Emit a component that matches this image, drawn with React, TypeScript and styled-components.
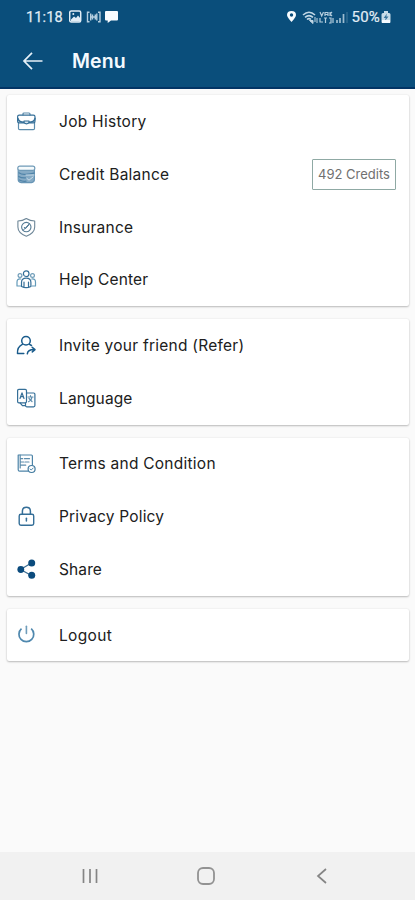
import React from "react";
import styled, { createGlobalStyle } from "styled-components";

const GlobalStyle = createGlobalStyle`
  * { box-sizing: border-box; }
  html, body { margin: 0; background: #fafafa; }
`;

const Screen = styled.div`
  display: flex;
  flex-direction: column;
  width: 415px;
  height: 900px;
  overflow: hidden;
  background: #fafafa;
  font-family: Inter, Roboto, sans-serif;
`;

const Header = styled.header`
  flex: none;
  height: 89px;
  background: #0a4e7b;
  border-bottom: 2px solid #023465;
  color: #f5faff;
`;

const StatusBar = styled.div`
  display: flex;
  align-items: center;
  justify-content: space-between;
  height: 34px;
  padding: 0 24px 0 26px;
  font: 400 14.5px/34px Roboto, sans-serif;
  color: #e2edf5;
`;

const StatusGroup = styled.div`
  display: flex;
  align-items: center;
  svg { display: block; flex: none; }
`;

const Clock = styled.span`
  width: 37px;
  padding-top: 1px;
  line-height: 33px;
  margin-right: 6px;
  letter-spacing: 0.15px;
  -webkit-text-stroke: 0.25px currentColor;
`;

const Battery = styled.span`
  margin-left: 3px;
  margin-right: 1px;
  padding-top: 1px;
  font-size: 15px;
  line-height: 33px;
  letter-spacing: 0.2px;
  -webkit-text-stroke: 0.2px currentColor;
`;

const TitleBar = styled.div`
  display: flex;
  align-items: center;
  height: 54px;
  padding-left: 22px;
  svg { display: block; }
`;

const Title = styled.h1`
  margin: 0 0 0 29px;
  font: 600 19.5px/24px Inter, sans-serif;
  letter-spacing: 0.1px;
`;

const Content = styled.main`
  display: flex;
  flex: 1;
  flex-direction: column;
  gap: 13px;
  padding: 6.4px 6px 0 7px;
`;

const Card = styled.section`
  background: #fff;
  border-radius: 2px;
  box-shadow: 0 1px 2px rgba(0, 0, 0, 0.24), 0 0 2px rgba(0, 0, 0, 0.08);
`;

const Row = styled.div`
  display: flex;
  align-items: center;
  height: 52.7px;
  padding: 0 13px 0 9px;
`;

const IconSlot = styled.span`
  display: flex;
  width: 43px;
  svg { display: block; }
`;

const Label = styled.span<{ $track: number }>`
  padding-top: 1.2px;
  font-size: 15.5px;
  line-height: 22px;
  letter-spacing: ${(p) => p.$track}px;
  color: #202020;
  white-space: nowrap;
`;

const Credits = styled.span`
  display: flex;
  align-items: center;
  justify-content: center;
  width: 84px;
  height: 31px;
  margin-left: auto;
  border: 1px solid #8fa9a4;
  border-radius: 1px;
  font: 400 13px/20px Inter, sans-serif;
  white-space: nowrap;
  color: #707070;
`;

const NavBar = styled.nav`
  display: flex;
  flex: none;
  align-items: center;
  justify-content: space-between;
  height: 48px;
  padding: 0 83px 0 80px;
  background: #f1f1f1;
  svg { display: block; }
`;

const Glyph = ({ children }: { children: React.ReactNode }) => (
  <svg width="21" height="21" viewBox="0 0 21 21" fill="none" stroke="#356f98" strokeWidth="1.2" strokeLinecap="round" strokeLinejoin="round">
    {children}
  </svg>
);

const icons = {
  job: (
    <Glyph>
      <path d="M7 4V3q0-1 1-1h5q1 0 1 1v1M2.500 11v6.500q0 1.200 1.200 1.200h13.600q1.200 0 1.200-1.200V11" stroke="#5c8cac" />
      <rect x="1.600" y="4.200" width="17.400" height="7.600" rx="1.600" />
      <path d="M2 7.500q1 3.800 6 3.800M19 7.500q-1 3.800-6 3.800" strokeWidth="1.400" />
      <path d="M8 10h5v1.600q-2.500 2.600-5 0z" fill="#d8e7f1" />
    </Glyph>
  ),
  credit: (
    <Glyph>
      <path d="M2.200 5.500h16.200v10q0 2.600-3 3.200H5.200q-3-.6-3-3.200z" fill="#86abc5" stroke="#6795b5" />
      <rect x="1.800" y="2.200" width="17" height="4.200" rx="2" fill="#f5fafc" stroke="#6f9ab7" />
      <path d="M2.800 8.800q3 2 7.200 1.500t8-1.200M2.700 12.500q3 1.800 6.800 1.400M3.500 16q3 1.600 6.500 1.200" stroke="#4f83a8" />
      <path d="M10 11h8M11 14.500l2 1.700 4-3.200" stroke="#d2e2ed" strokeWidth=".9" />
    </Glyph>
  ),
  insurance: (
    <Glyph>
      <path d="M10.300 1.500Q14 3.900 18.700 4v6q0 6-8.400 9.300Q1.900 16 1.900 10V4q4.700-.1 8.400-2.500z" stroke="#6e8798" strokeWidth="1.100" />
      <circle cx="10.300" cy="10.100" r="4.700" stroke="#577c95" strokeWidth="1.100" />
      <path d="m8.200 10.300 1.300 1.400 3.300-3.700M7.200 13.300l6.200-6.600" stroke="#4c7693" strokeWidth="1" />
    </Glyph>
  ),
  help: (
    <Glyph>
      <circle cx="10.200" cy="4.700" r="2.800" />
      <circle cx="4" cy="6.500" r="1.900" stroke="#6f9cb8" />
      <circle cx="16.500" cy="6.500" r="1.900" stroke="#6f9cb8" />
      <path d="M5.500 17.500v-4q0-4.300 4.700-4.300t4.700 4.300v4q-4.700 2.400-9.400 0zM8 13v4.500M12.500 13v4.500" />
      <path d="M4.700 10Q1 9.500 1 13v4h3.500M15.800 10q3.700-.5 3.700 3v4H16" stroke="#639ab9" />
    </Glyph>
  ),
  invite: (
    <Glyph>
      <g stroke="#1a5c8c" strokeWidth="1.500">
        <circle cx="10" cy="5.800" r="4.300" />
        <path d="M6.300 9.300C2.800 11 1.200 14 1.500 18.500h6.300M13.500 9.400l2 1.100M11.300 18.800q.5-4.300 7-4.200M16.200 12.300l2.800 2.300-2.700 2.300" />
      </g>
    </Glyph>
  ),
  language: (
    <Glyph>
      <rect x="1.600" y="1.400" width="8.900" height="13.500" rx="1.300" />
      <path d="M10.500 5h7.200q1.200 0 1.200 1.200v11.400q0 1.200-1.200 1.200h-7q-1.200 0-1.200-1.200V15M4 10.500l2-5.600 2 5.600M4.800 8.700h2.500M4.200 15l2.200 2.600H9" />
      <path d="M12 9h5M14.500 7.700V9M16 9q-.6 3.500-3.500 4.700M13 10.500l3 3" stroke="#5c8cac" />
    </Glyph>
  ),
  terms: (
    <Glyph>
      <path d="M12 18.200H3.700q-1.500 0-1.500-1.500V2h13.200q1 0 1 1v9" stroke="#4d84a8" />
      <path d="M4.200 2v13M4.700 5.700h2M8.500 5.700h5M4.700 9h3M9 9h4M4.700 12.200h5" stroke="#5c8cac" />
      <circle cx="15.600" cy="16" r="3.500" fill="#fff" stroke="#427ba0" />
      <path d="m14 16 1.200 1 2-2" stroke="#427ba0" strokeWidth=".9" />
    </Glyph>
  ),
  privacy: (
    <Glyph>
      <rect x="3.200" y="8.200" width="14.500" height="11" rx="1.700" strokeWidth="1.400" />
      <path d="M6.400 8V5.300q0-4 4-4t4 4V8" strokeWidth="1.500" />
      <path d="M10.400 12.300v2.700" strokeWidth="1.500" />
    </Glyph>
  ),
  share: (
    <Glyph>
      <path d="M15 4.300 4.500 10.500 15 16.200" stroke="#3b6d92" strokeWidth="1.300" />
      <g fill="#0b4b7d" stroke="none">
        <circle cx="15.700" cy="4" r="3.500" /><circle cx="4.800" cy="10.500" r="3.400" /><circle cx="15.700" cy="16.300" r="3.500" />
      </g>
    </Glyph>
  ),
  logout: (
    <Glyph>
      <path d="M5.500 4.700a7.400 7.400 0 1 0 9.700 0" stroke="#4f88ae" strokeWidth="1.700" strokeLinecap="butt" />
      <path d="M10.400 2.200v7.200" stroke="#6f9dba" strokeWidth="1.600" />
    </Glyph>
  ),
};

type Item = { icon: keyof typeof icons; label: string; track: number; credits?: string };

const groups: Item[][] = [
  [
    { icon: "job", label: "Job History", track: 0.28 },
    { icon: "credit", label: "Credit Balance", track: 0.24, credits: "492 Credits" },
    { icon: "insurance", label: "Insurance", track: 0.22 },
    { icon: "help", label: "Help Center", track: 0.16 },
  ],
  [
    { icon: "invite", label: "Invite your friend (Refer)", track: 0.25 },
    { icon: "language", label: "Language", track: 0.12 },
  ],
  [
    { icon: "terms", label: "Terms and Condition", track: 0.25 },
    { icon: "privacy", label: "Privacy Policy", track: 0.19 },
    { icon: "share", label: "Share", track: 0.12 },
  ],
  [{ icon: "logout", label: "Logout", track: 0.35 }],
];

const NotificationIcons = () => (
  <svg width="51" height="16" viewBox="0 0 51 16">
    <rect x=".7" y="2" width="11" height="11" rx="1.500" fill="none" stroke="#e2edf5" strokeWidth="1.500" />
    <path d="m2 10.500 3-3L7 9l2-2.500 2.500 3v3H2z" fill="#e2edf5" />
    <circle cx="4.300" cy="5" r="1" fill="#e2edf5" />
    <path d="M20.500 3.200h-2v9.500h2M29 3.200h2v9.500h-2M21.700 4.500v7M27.800 4.500v7M22 8h6M23.500 5.500v5M26.300 5.500v5" fill="none" stroke="#b6cfe0" strokeWidth="1.400" />
    <path d="M37 2h11q1 0 1 1v7.500q0 1-1 1h-6L38.700 14v-2.500H37q-1 0-1-1V3q0-1 1-1z" fill="#f8fcff" />
  </svg>
);

const SignalIcons = () => (
  <svg width="63" height="18" viewBox="0 0 63 18">
    <path d="M5.500 3Q1 3 1 7q0 2 4.500 7Q10 9 10 7q0-4-4.500-4z" fill="#f8fcff" />
    <circle cx="5.500" cy="7" r="1.700" fill="#0a4e7b" />
    <path d="M17 7q6-5.500 12 0M19 9.300q4-3.500 8 0M21 11.500q2-1.700 4 0" fill="none" stroke="#c1d7e5" strokeWidth="1.600" />
    <path d="M23.500 12.500h3.500v3zM29 9v5M31 10v5" stroke="#bfd5e4" fill="#bfd5e4" />
    <path d="M34 4l1.700 4L37.500 4M39 8V4.500h3V8M39 6.500h3M44 4v4M46 4l-2 2 2 2M34 10v4h3M38 10h3M39.500 10v5M43 10h2v5h-2M47 10v5" fill="none" stroke="#b4cddd" strokeWidth="1.200" />
    <path d="M51 12v3M54 10v5M57.500 6v9" stroke="#9dbcd0" strokeWidth="1.700" />
    <path d="M61 4v11" stroke="#42789b" />
  </svg>
);

const BatteryIcon = () => (
  <svg width="10" height="14" viewBox="0 0 10 14">
    <path d="M3 1h4v2h1q1.500 0 1.500 1.500V12q0 1-1 1h-7q-1 0-1-1V4.500Q.5 3 2 3h1z" fill="#c8dce8" />
    <path d="M6 3.500 2.700 8h2L4 11l3.500-4.500H5.300z" fill="#38749c" />
    <path d="M1 10h8v3H1z" fill="#f5faff" />
  </svg>
);

export default function App() {
  return (
    <Screen>
      <GlobalStyle />
      <Header>
        <StatusBar>
          <StatusGroup><Clock>11:18</Clock><NotificationIcons /></StatusGroup>
          <StatusGroup><SignalIcons /><Battery>50%</Battery><BatteryIcon /></StatusGroup>
        </StatusBar>
        <TitleBar>
          <svg width="21" height="20" viewBox="0 0 21 20" fill="none" stroke="#e6f0f8" strokeWidth="1.700"><path d="M20.500 10H2M10 1.800 2 10l8 8.200" /></svg>
          <Title>Menu</Title>
        </TitleBar>
      </Header>
      <Content>
        {groups.map((items) => (
          <Card key={items[0].label}>
            {items.map((item) => (
              <Row key={item.label}>
                <IconSlot>{icons[item.icon]}</IconSlot>
                <Label $track={item.track}>{item.label}</Label>
                {item.credits && <Credits>{item.credits}</Credits>}
              </Row>
            ))}
          </Card>
        ))}
      </Content>
      <NavBar>
        <svg width="20" height="18" viewBox="0 0 20 18" stroke="#858585" strokeWidth="1.700"><path d="M3.500 2v14M10 2v14M16.500 2v14" /></svg>
        <svg width="20" height="20" viewBox="0 0 20 20" fill="none" stroke="#929292" strokeWidth="1.800"><rect x="2" y="2" width="16" height="16" rx="5" /></svg>
        <svg width="20" height="18" viewBox="0 0 20 18" fill="none" stroke="#858585" strokeWidth="1.700"><path d="M14 2 6 9l8 7" /></svg>
      </NavBar>
    </Screen>
  );
}
